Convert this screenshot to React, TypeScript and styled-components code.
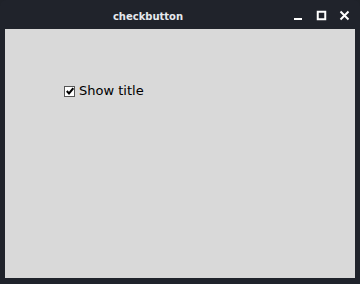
import React from "react";
import styled, { createGlobalStyle } from "styled-components";

const Global = createGlobalStyle`
  html, body { margin: 0; padding: 0; background: #1f2229; }
  body { width: 360px; height: 284px; overflow: hidden; }
`;

const Frame = styled.div`
  width: 360px;
  height: 284px;
  box-sizing: border-box;
  background: #20232b;
  border-radius: 6px 6px 0 0;
  display: flex;
  flex-direction: column;
  padding: 0 5px 6px 5px;
`;

const TitleBar = styled.div`
  height: 29px;
  flex: none;
  display: grid;
  grid-template-columns: 1fr auto 1fr;
  align-items: center;
  margin: 0 -5px;
`;

const Title = styled.div`
  grid-column: 2;
  color: #e6e9ee;
  font-family: "DejaVu Sans", sans-serif;
  font-weight: bold;
  font-size: 10px;
  padding-right: 64px;
  padding-top: 3px;
`;

const Controls = styled.div`
  grid-column: 3;
  justify-self: end;
  display: flex;
  align-items: center;
  gap: 12px;
  padding-right: 10px;
  padding-top: 1px;
`;

const CtrlIcon = styled.svg`
  width: 11px;
  height: 11px;
  display: block;
`;

const Content = styled.div`
  flex: 1;
  background: #d9d9d9;
  padding: 54px 0 0 59px;
`;

const CheckRow = styled.label`
  display: flex;
  align-items: center;
  gap: 4px;
  font-family: "DejaVu Sans", sans-serif;
  font-size: 13px;
  color: #000;
`;

const Box = styled.span`
  width: 9px;
  height: 9px;
  margin-top: 1px;
  background: #fff;
  border: 1px solid #555;
  display: flex;
  align-items: center;
  justify-content: center;
`;

export default function App() {
  return (
    <>
      <Global />
      <Frame>
        <TitleBar>
          <Title>checkbutton</Title>
          <Controls>
            <CtrlIcon viewBox="0 0 11 11">
              <rect x="1" y="8" width="8" height="2" fill="#fff" />
            </CtrlIcon>
            <CtrlIcon viewBox="0 0 11 11">
              <rect x="1.75" y="1.75" width="7.5" height="7.5" fill="none" stroke="#fff" strokeWidth="2" />
            </CtrlIcon>
            <CtrlIcon viewBox="0 0 11 11">
              <path d="M1.5 1.5 L9.5 9.5 M9.5 1.5 L1.5 9.5" stroke="#fff" strokeWidth="2" />
            </CtrlIcon>
          </Controls>
        </TitleBar>
        <Content>
          <CheckRow>
            <Box>
              <svg width="8" height="8" viewBox="0 0 8 8">
                <path d="M0.8 4 L3 6.4 L7.3 1.2" fill="none" stroke="#000" strokeWidth="2" />
              </svg>
            </Box>
            Show title
          </CheckRow>
        </Content>
      </Frame>
    </>
  );
}
